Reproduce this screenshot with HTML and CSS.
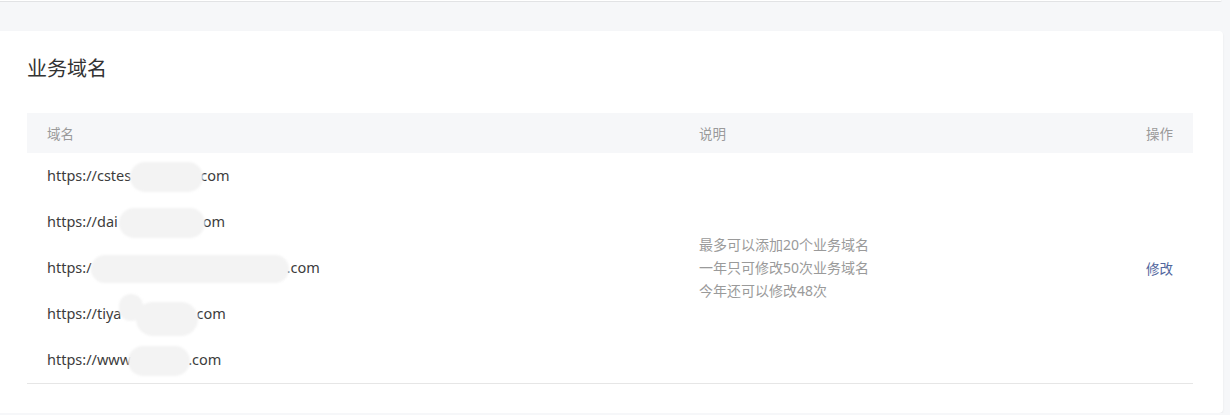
FILE: index.html
```html
<!DOCTYPE html>
<html lang="zh-CN">
<head>
    <meta charset="UTF-8">
    <title>业务域名</title>
    <link rel="stylesheet" href="styles.css">
</head>
<body>

<div class="top-strip"></div>

<div class="card">
    <h2 class="card-title">业务域名</h2>
    <table class="domain-table">
        <colgroup>
            <col class="col-domain">
            <col class="col-desc">
            <col class="col-op">
        </colgroup>
        <thead>
            <tr>
                <th>域名</th>
                <th>说明</th>
                <th class="op">操作</th>
            </tr>
        </thead>
        <tbody>
            <tr>
                <td class="domain">https://cstes<span class="mask m1"></span>com</td>
                <td class="desc" rowspan="5">
                    <p>最多可以添加20个业务域名</p>
                    <p>一年只可修改50次业务域名</p>
                    <p>今年还可以修改48次</p>
                </td>
                <td class="op" rowspan="5"><a href="#" class="link">修改</a></td>
            </tr>
            <tr>
                <td class="domain">https://dai<span class="mask m2"></span>om</td>
            </tr>
            <tr>
                <td class="domain">https:/<span class="mask m3"></span>.com</td>
            </tr>
            <tr>
                <td class="domain">https://tiya<span class="mask m4"><span class="mask-dot"></span></span>com</td>
            </tr>
            <tr class="last">
                <td class="domain">https://www<span class="mask m5"></span>.com</td>
            </tr>
        </tbody>
    </table>
</div>

</body>
</html>
```

FILE: styles.css
```css
body {
    margin: 0;
    padding: 0;
    background-color: #f6f7f9;
    font-family: "Noto Sans", "Noto Sans CJK SC", sans-serif;
    color: #333;
    overflow: hidden;
}
.top-strip {
    width: 1222px;
    height: 1px;
    background-color: #fff;
    border-bottom: 1px solid #e2e3e5;
    border-radius: 0 0 3px 0;
}
.card {
    width: 1227px;
    height: 382px;
    margin: 29px 0 0 -4px;
    padding: 24px 30px 0 31px;
    box-sizing: border-box;
    background-color: #fff;
    border-radius: 4px;
    box-shadow: 0 1px 2px rgba(0, 0, 0, 0.08);
}
.card-title {
    margin: 0 0 30px 0;
    font-size: 20px;
    font-weight: normal;
    line-height: 28px;
    color: #333;
}
.domain-table {
    width: 100%;
    border-collapse: collapse;
    table-layout: fixed;
}
.col-domain {
    width: 672px;
}
.col-op {
    width: 120px;
}
.domain-table th {
    height: 40px;
    padding: 0 20px;
    background-color: #f6f7f9;
    font-size: 13.5px;
    font-weight: normal;
    color: #9a9a9a;
    text-align: left;
}
.domain-table th:nth-child(2) {
    padding-left: 0;
}
.domain-table th.op,
.domain-table td.op {
    text-align: right;
    padding-right: 20px;
}
.domain-table td {
    padding: 0;
    vertical-align: middle;
}
.domain-table tbody tr.last td,
.domain-table td.desc,
.domain-table td.op {
    border-bottom: 1px solid #e6e6e6;
}
.domain {
    height: 46px;
    padding: 2px 0 0 20px !important;
    box-sizing: border-box;
    font-size: 14.5px;
    color: #3c3c3c;
    white-space: nowrap;
}
.desc p {
    margin: 0;
    font-size: 14px;
    line-height: 23px;
    color: #9a9a9a;
}
.link {
    font-size: 13.5px;
    color: #51669d;
    text-decoration: none;
}
.mask {
    display: inline-block;
    position: relative;
    height: 30px;
    vertical-align: middle;
    background-color: #f3f3f3;
    border-radius: 15px;
    filter: blur(1px);
}
.m1 {
    width: 73px;
    margin-left: -1px;
    margin-right: -3px;
}
.m2 {
    width: 86px;
    margin-left: 1px;
    margin-right: -2px;
}
.m3 {
    width: 198px;
    height: 28px;
    margin-left: -1px;
    margin-right: -2px;
    border-radius: 14px;
}
.m4 {
    width: 62px;
    height: 34px;
    margin-left: 15px;
    margin-right: -2px;
    border-radius: 17px;
    top: 4px;
}
.mask-dot {
    position: absolute;
    left: -17px;
    top: -8px;
    width: 24px;
    height: 27px;
    border-radius: 12px;
    background-color: #f3f3f3;
}
.m5 {
    width: 62px;
    margin-left: -3px;
    margin-right: -2px;
}
```
